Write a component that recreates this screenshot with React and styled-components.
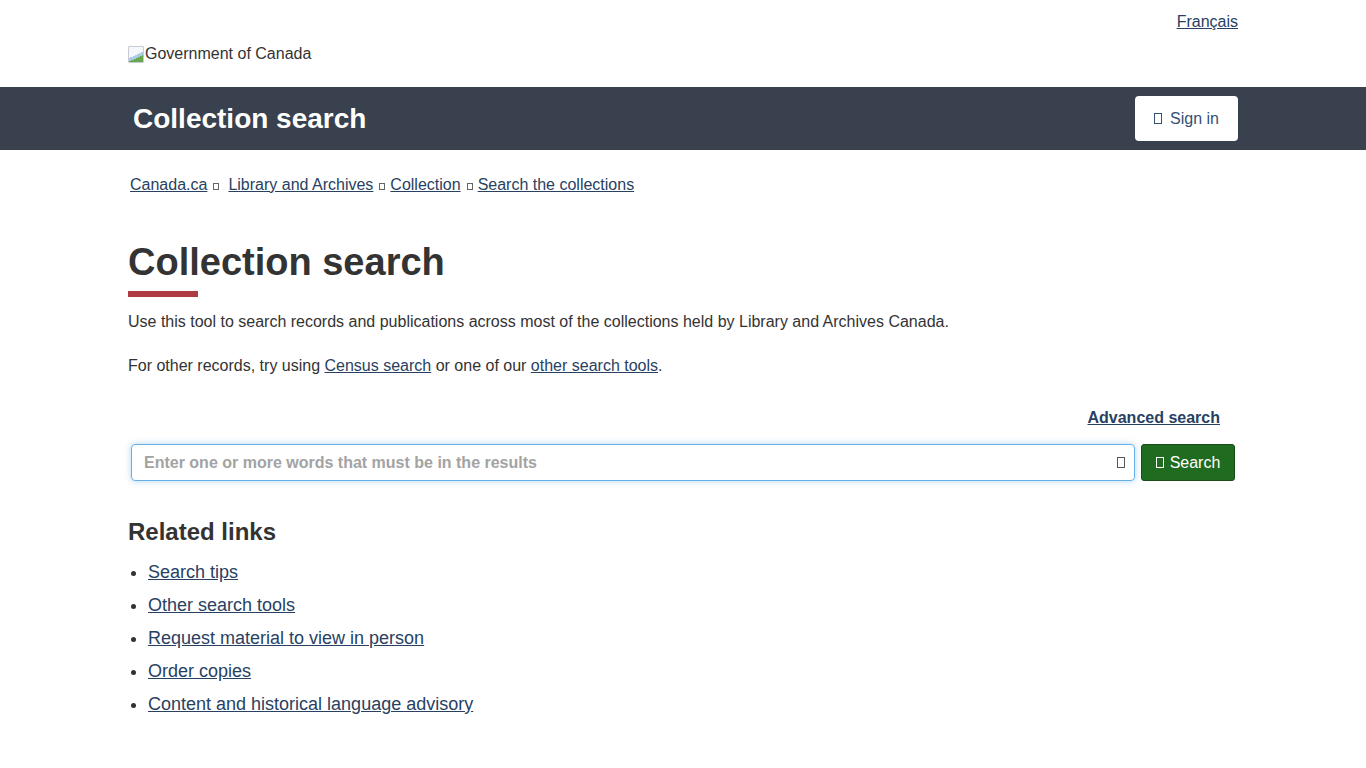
import React from 'react';
import styled, { createGlobalStyle } from 'styled-components';

const GlobalStyle = createGlobalStyle`
  * { box-sizing: border-box; }
  body {
    margin: 0;
    background: #fff;
    font-family: "Liberation Sans", Arial, sans-serif;
    font-size: 16px;
    color: #333;
  }
`;

const Container = styled.div`
  width: 1140px;
  margin: 0 auto;
  padding: 0 15px;
`;

const TopBar = styled.header`
  height: 87px;
`;

const TopInner = styled(Container)`
  display: flex;
  flex-direction: column;
`;

const LangLink = styled.a`
  align-self: flex-end;
  margin-top: 12px;
  font-size: 16px;
  line-height: 20px;
  color: #284162;
  text-decoration: underline;
`;

const Logo = styled.div`
  display: flex;
  align-items: center;
  margin-top: 13px;
  font-size: 16px;
  line-height: 18px;
  color: #333;
`;

const BrokenImg = styled.span`
  display: inline-block;
  width: 16px;
  height: 17px;
  margin-right: 1px;
  border: 1px solid #c8ccd2;
  border-radius: 1px;
  background: linear-gradient(155deg, #f4f7fb 0 52%, #a9cde8 52% 68%, #6aa84f 68%);
`;

const AppBar = styled.div`
  background: #38414d;
  height: 63px;
`;

const AppInner = styled(Container)`
  height: 100%;
  display: flex;
  align-items: center;
  justify-content: space-between;
`;

const AppTitle = styled.div`
  color: #fff;
  font-size: 28px;
  font-weight: 700;
  padding-left: 5px;
  padding-top: 1px;
`;

const SignIn = styled.button`
  height: 45px;
  width: 103px;
  border: none;
  border-radius: 4px;
  background: #fff;
  color: #335075;
  font-family: inherit;
  font-size: 16px;
  display: flex;
  align-items: center;
  justify-content: center;
  gap: 8px;
`;

const Tofu = styled.span`
  display: inline-block;
  width: ${p => p.$w || 7}px;
  height: ${p => p.$h || 10}px;
  border: 1px solid ${p => p.$c || 'currentColor'};
  flex: none;
`;

const Breadcrumb = styled.nav`
  display: flex;
  align-items: center;
  padding: 25px 0 0 2px;
  height: 44px;
  line-height: 18px;
  a { color: #284162; text-decoration: underline; }
`;

const Sep = styled.span`
  display: inline-flex;
  align-items: center;
  margin: 0 ${p => p.$r || 5}px 0 6px;
  color: #666;
  padding-top: 4px;
`;

const H1 = styled.h1`
  margin: 46px 0 0;
  font-size: 38px;
  line-height: 44px;
  font-weight: 700;
  color: #333;
  padding-bottom: 7px;
  position: relative;
  &::after {
    content: "";
    position: absolute;
    left: 0;
    bottom: -6px;
    width: 70px;
    height: 6px;
    background: #af3c43;
  }
`;

const Para = styled.p`
  margin: 20px 0 0;
  font-size: 16px;
  line-height: 22px;
  & + & { margin-top: 22px; }
  a { color: #284162; text-decoration: underline; }
`;

const AdvRow = styled.div`
  display: flex;
  justify-content: flex-end;
  margin-top: 31px;
  padding-right: 18px;
  a {
    color: #284162;
    font-weight: 700;
    text-decoration: underline;
    line-height: 20px;
  }
`;

const SearchRow = styled.div`
  display: flex;
  gap: 6px;
  margin-top: 16px;
  padding-left: 3px;
`;

const InputWrap = styled.div`
  flex: 1;
  height: 37px;
  border: 1px solid #66afe9;
  border-radius: 4px;
  box-shadow: 0 0 6px rgba(102, 175, 233, 0.5);
  display: flex;
  align-items: center;
  padding: 0 9px 0 11px;
`;

const Input = styled.input`
  flex: 1;
  border: none;
  outline: none;
  padding: 0 2px 0 1px;
  font-family: inherit;
  font-size: 16px;
  font-weight: 700;
  color: #333;
  background: transparent;
  &::placeholder { color: #a3a3a3; }
`;

const SearchBtn = styled.button`
  width: 94px;
  height: 37px;
  margin-right: 3px;
  border: 1px solid #184d18;
  border-radius: 3px;
  background: #1f6b1f;
  color: #fff;
  font-family: inherit;
  font-size: 16px;
  display: flex;
  align-items: center;
  justify-content: center;
  gap: 6px;
`;

const H2 = styled.h2`
  margin: 38px 0 0;
  font-size: 24px;
  line-height: 26px;
  font-weight: 700;
  color: #333;
`;

const List = styled.ul`
  margin: 17px 0 0;
  padding-left: 20px;
  li {
    font-size: 18px;
    line-height: 21px;
    margin-bottom: 12px;
  }
  a { color: #284162; text-decoration: underline; }
`;

const links = [
  'Search tips',
  'Other search tools',
  'Request material to view in person',
  'Order copies',
  'Content and historical language advisory',
];

export default function App() {
  return (
    <>
      <GlobalStyle />
      <TopBar>
        <TopInner>
          <LangLink href="#">Français</LangLink>
          <Logo><BrokenImg />Government of Canada</Logo>
        </TopInner>
      </TopBar>
      <AppBar>
        <AppInner>
          <AppTitle>Collection search</AppTitle>
          <SignIn><Tofu $w={8} $h={11} />Sign in</SignIn>
        </AppInner>
      </AppBar>
      <Container>
        <Breadcrumb>
          <a href="#">Canada.ca</a>
          <Sep $r={9}><Tofu $w={6} $h={7} /></Sep>
          <a href="#">Library and Archives</a>
          <Sep><Tofu $w={6} $h={7} /></Sep>
          <a href="#">Collection</a>
          <Sep><Tofu $w={6} $h={7} /></Sep>
          <a href="#">Search the collections</a>
        </Breadcrumb>
        <H1>Collection search</H1>
        <Para>Use this tool to search records and publications across most of the collections held by Library and Archives Canada.</Para>
        <Para>For other records, try using <a href="#">Census search</a> or one of our <a href="#">other search tools</a>.</Para>
        <AdvRow><a href="#">Advanced search</a></AdvRow>
        <SearchRow>
          <InputWrap>
            <Input placeholder="Enter one or more words that must be in the results" />
            <Tofu $w={8} $h={11} $c="#555" />
          </InputWrap>
          <SearchBtn><Tofu $w={8} $h={11} />Search</SearchBtn>
        </SearchRow>
        <H2>Related links</H2>
        <List>
          {links.map(l => (
            <li key={l}><a href="#">{l}</a></li>
          ))}
        </List>
      </Container>
    </>
  );
}
